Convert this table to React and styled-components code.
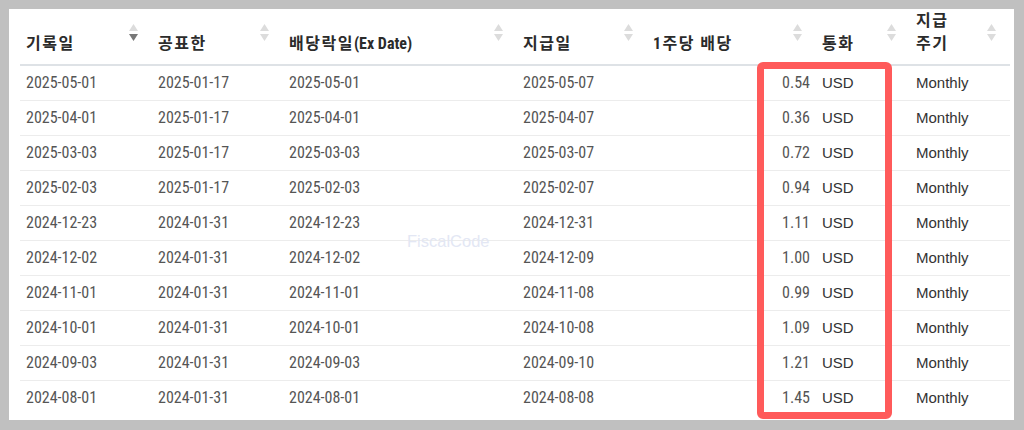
import React from 'react';
import styled, { createGlobalStyle } from 'styled-components';

const GlobalStyle = createGlobalStyle`
	html, body {
		margin: 0;
		padding: 0;
		background: #c0c0c0;
	}
	body {
		width: 1024px;
		height: 430px;
		overflow: hidden;
	}
`;

const Frame = styled.div`
	padding: 9px 10px 10px 9px;
	height: 430px;
	box-sizing: border-box;
`;

const Panel = styled.div`
	position: relative;
	background: #fff;
	height: 411px;
	padding: 0 0 0 11px;
	box-sizing: border-box;
`;

const Table = styled.table`
	width: 990px;
	table-layout: fixed;
	border-collapse: collapse;
`;

const HeadCell = styled.th`
	width: ${(p) => p.width}px;
	height: 54px;
	padding: 0 0 9px 6px;
	box-sizing: border-box;
	vertical-align: bottom;
	text-align: left;
	border-bottom: 2px solid #dee2e6;
`;

const HeadInner = styled.div`
	display: flex;
	justify-content: space-between;
	align-items: flex-end;
`;

const HeadLabel = styled.span`
	font-family: 'Roboto Condensed', 'Noto Sans CJK KR', sans-serif;
	font-weight: 700;
	font-size: 16px;
	line-height: 23px;
	letter-spacing: 1.5px;
	color: #2b2b2b;
	max-width: ${(p) => (p.narrow ? '40px' : 'none')};
`;

const Latin = styled.span`
	letter-spacing: 0;
`;

const SortIcon = styled.svg`
	flex: none;
	margin: 0 14px 14px 0;
`;

const Row = styled.tr`
	border-bottom: 1px solid #ececec;
	&:last-child {
		border-bottom: none;
	}
`;

const Cell = styled.td`
	height: 35px;
	padding: 0 ${(p) => (p.right ? '6px' : '0')} 0 ${(p) => (p.right ? '0' : '6px')};
	box-sizing: border-box;
	text-align: ${(p) => (p.right ? 'right' : 'left')};
	font-family: ${(p) =>
		p.plain ? "'Liberation Sans', Arial, sans-serif" : "'Roboto Condensed', 'Liberation Sans Narrow', sans-serif"};
	font-size: ${(p) => (p.plain ? '15px' : '16px')};
	color: ${(p) => (p.plain ? '#333' : '#555')};
	white-space: nowrap;
`;

const Highlight = styled.div`
	position: absolute;
	left: 748px;
	top: 53px;
	width: 135px;
	height: 357px;
	box-sizing: border-box;
	border: 7px solid #ff5a5a;
	border-radius: 6px;
	pointer-events: none;
`;

const Watermark = styled.div`
	position: absolute;
	left: 398px;
	top: 223px;
	font-family: 'Liberation Sans', Arial, sans-serif;
	font-size: 16.5px;
	color: #e3e7f4;
	pointer-events: none;
`;

const columns = [
	{ label: '기록일', width: 132, sorted: true },
	{ label: '공표한', width: 131 },
	{ label: '배당락일', latin: '(Ex Date)', width: 234 },
	{ label: '지급일', width: 130 },
	{ label: '1주당 배당', width: 169 },
	{ label: '통화', width: 94 },
	{ label: '지급 주기', width: 100, narrow: true }
];

const rows = [
	['2025-05-01', '2025-01-17', '2025-05-01', '2025-05-07', '0.54'],
	['2025-04-01', '2025-01-17', '2025-04-01', '2025-04-07', '0.36'],
	['2025-03-03', '2025-01-17', '2025-03-03', '2025-03-07', '0.72'],
	['2025-02-03', '2025-01-17', '2025-02-03', '2025-02-07', '0.94'],
	['2024-12-23', '2024-01-31', '2024-12-23', '2024-12-31', '1.11'],
	['2024-12-02', '2024-01-31', '2024-12-02', '2024-12-09', '1.00'],
	['2024-11-01', '2024-01-31', '2024-11-01', '2024-11-08', '0.99'],
	['2024-10-01', '2024-01-31', '2024-10-01', '2024-10-08', '1.09'],
	['2024-09-03', '2024-01-31', '2024-09-03', '2024-09-10', '1.21'],
	['2024-08-01', '2024-01-31', '2024-08-01', '2024-08-08', '1.45']
];

const Sort = ({ sorted }) => (
	<SortIcon width="9" height="17" viewBox="0 0 9 17">
		<polygon points="4.5,0 9,7 0,7" fill="#dcdcdc" />
		<polygon points="0,10 9,10 4.5,17" fill={sorted ? '#777' : '#dcdcdc'} />
	</SortIcon>
);

const App = () => (
	<Frame>
		<GlobalStyle />
		<Panel>
			<Table>
				<thead>
					<tr>
						{columns.map((col) => (
							<HeadCell key={col.label} width={col.width}>
								<HeadInner>
									<HeadLabel narrow={col.narrow}>
										{col.label}
										{col.latin && <Latin>{col.latin}</Latin>}
									</HeadLabel>
									<Sort sorted={col.sorted} />
								</HeadInner>
							</HeadCell>
						))}
					</tr>
				</thead>
				<tbody>
					{rows.map((r, i) => (
						<Row key={i}>
							<Cell>{r[0]}</Cell>
							<Cell>{r[1]}</Cell>
							<Cell>{r[2]}</Cell>
							<Cell>{r[3]}</Cell>
							<Cell right>{r[4]}</Cell>
							<Cell plain>USD</Cell>
							<Cell plain>Monthly</Cell>
						</Row>
					))}
				</tbody>
			</Table>
			<Highlight />
			<Watermark>FiscalCode</Watermark>
		</Panel>
	</Frame>
);

export default App;
